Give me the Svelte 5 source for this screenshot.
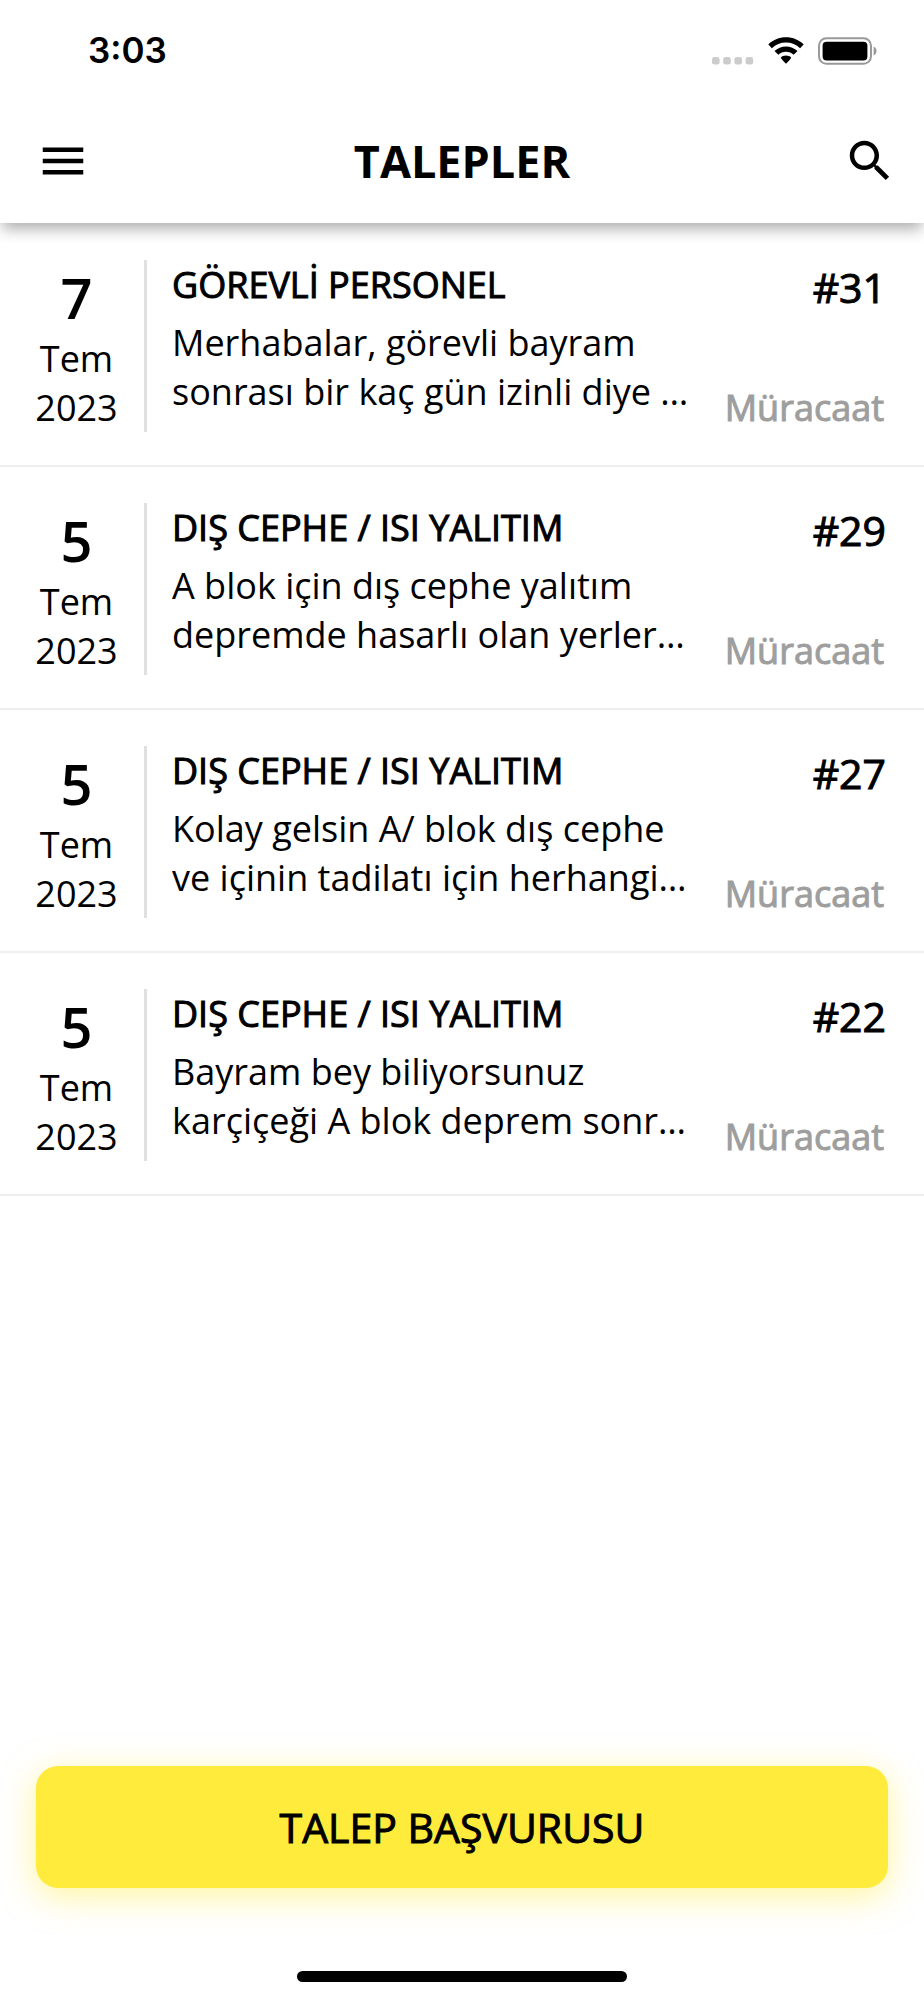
<script lang="ts">
  interface Talep {
    id: number;
    day: number;
    month: string;
    year: number;
    title: string;
    text: string;
    status: string;
  }

  const talepler: Talep[] = [
    {
      id: 31,
      day: 7,
      month: 'Tem',
      year: 2023,
      title: 'GÖREVLİ PERSONEL',
      text: 'Merhabalar, görevli bayram sonrası bir kaç gün izinli diye …',
      status: 'Müracaat'
    },
    {
      id: 29,
      day: 5,
      month: 'Tem',
      year: 2023,
      title: 'DIŞ CEPHE / ISI YALITIM',
      text: 'A blok için dış cephe yalıtım depremde hasarlı olan yerler…',
      status: 'Müracaat'
    },
    {
      id: 27,
      day: 5,
      month: 'Tem',
      year: 2023,
      title: 'DIŞ CEPHE / ISI YALITIM',
      text: 'Kolay gelsin A/ blok dış cephe ve içinin tadilatı için herhangi…',
      status: 'Müracaat'
    },
    {
      id: 22,
      day: 5,
      month: 'Tem',
      year: 2023,
      title: 'DIŞ CEPHE / ISI YALITIM',
      text: 'Bayram bey biliyorsunuz karçiçeği A blok deprem sonr…',
      status: 'Müracaat'
    }
  ];
</script>

<div class="screen">
  <header>
    <div class="status-bar">
      <span class="clock">3:03</span>
      <div class="indicators">
        <svg class="signal" width="42" height="8" viewBox="0 0 42 8" aria-hidden="true">
          {#each [0, 11.2, 22.4, 33.6] as x}
            <rect {x} y="0" width="7.6" height="7.6" rx="2.4" />
          {/each}
        </svg>
        <svg class="wifi" width="36" height="27" viewBox="0 0 36 27" aria-hidden="true">
          <path d="M18 0.3C24.9 0.3 31.2 2.9 35.7 7.5L32.1 11.2C28.4 7.5 23.4 5.5 18 5.5S7.6 7.5 3.9 11.2L0.3 7.5C4.8 2.9 11.1 0.3 18 0.3Z" />
          <path d="M18 9.4C22.4 9.4 26.5 11.1 29.5 14L25.7 17.8C23.7 15.9 20.9 14.7 18 14.7S12.3 15.9 10.3 17.8L6.5 14C9.5 11.1 13.6 9.4 18 9.4Z" />
          <path d="M18 18.6C20 18.6 21.8 19.3 23.2 20.5C22.9 22 20.3 24.6 18 26.7C15.7 24.6 13.1 22 12.8 20.5C14.2 19.3 16 18.6 18 18.6Z" />
        </svg>
        <svg width="60" height="28" viewBox="0 0 60 28" aria-hidden="true">
          <rect x="1" y="1.2" width="52" height="25.6" rx="7.5" fill="none" stroke="#999" stroke-width="2" />
          <rect x="4.6" y="4.8" width="44.8" height="18.6" rx="4" />
          <path d="M55.6 9.5C57.4 10.2 58.5 12 58.5 14S57.4 17.8 55.6 18.5Z" fill="#999" />
        </svg>
      </div>
    </div>
    <div class="app-bar">
      <button class="icon-btn" aria-label="Menü">
        <svg width="54" height="54" viewBox="0 0 24 24" aria-hidden="true">
          <path d="M3 18h18v-2H3v2zm0-5h18v-2H3v2zm0-7v2h18V6H3z" />
        </svg>
      </button>
      <h1>TALEPLER</h1>
      <button class="icon-btn" aria-label="Ara">
        <svg width="54" height="54" viewBox="0 0 24 24" aria-hidden="true">
          <path
            d="M15.5 14h-.79l-.28-.27C15.41 12.59 16 11.11 16 9.5 16 5.91 13.09 3 9.5 3S3 5.91 3 9.5 5.91 16 9.5 16c1.61 0 3.09-.59 4.23-1.57l.27.28v.79l5 4.99L20.49 19l-4.99-5zm-6 0C7.01 14 5 11.99 5 9.5S7.01 5 9.5 5 14 7.01 14 9.5 11.99 14 9.5 14z"
          />
        </svg>
      </button>
    </div>
  </header>

  <ul>
    {#each talepler as talep (talep.id)}
      <li>
        <div class="date">
          <strong>{talep.day}</strong>
          <span>{talep.month}</span>
          <span>{talep.year}</span>
        </div>
        <div class="body">
          <h2>{talep.title}</h2>
          <p>{talep.text}</p>
        </div>
        <div class="meta">
          <span class="number">#{talep.id}</span>
          <span class="status">{talep.status}</span>
        </div>
      </li>
    {/each}
  </ul>

  <footer>
    <button class="apply">TALEP BAŞVURUSU</button>
    <div class="home-indicator"></div>
  </footer>
</div>

<style>
  :global(body) {
    margin: 0;
    background: #fff;
  }
  .screen {
    display: flex;
    flex-direction: column;
    min-height: 100vh;
    font-family: 'Open Sans', 'Noto Sans', sans-serif;
    font-size: 36px;
    line-height: 49px;
    color: #000;
  }
  button {
    border: 0;
    font: inherit;
    color: inherit;
    cursor: pointer;
  }
  svg {
    display: block;
  }
  header {
    position: relative;
    background: #fff;
    box-shadow: 0 8px 14px -2px rgba(0, 0, 0, 0.32);
  }
  .status-bar {
    display: flex;
    align-items: center;
    justify-content: space-between;
    height: 98px;
    padding: 3px 46px 0 88px;
    box-sizing: border-box;
  }
  .clock {
    font-family: Inter, sans-serif;
    font-size: 35px;
    font-weight: 600;
  }
  .indicators {
    display: flex;
    align-items: center;
    gap: 14px;
  }
  .signal {
    align-self: flex-end;
    fill: #ccc;
  }
  .app-bar {
    display: flex;
    align-items: center;
    height: 125px;
    padding: 0 27px 0 36px;
  }
  .icon-btn {
    flex: none;
    padding: 0;
    background: none;
  }
  h1 {
    flex: 1;
    margin: 0;
    padding-right: 9px;
    font-size: 45px;
    font-weight: 700;
    text-align: center;
  }
  ul {
    flex: 1;
    margin: 0;
    padding: 1px 0 0;
    list-style: none;
  }
  li {
    display: flex;
    padding: 36px 38px 33px 36px;
    border-bottom: 2px solid #eee;
  }
  .date {
    display: flex;
    flex-direction: column;
    align-items: center;
    flex: none;
    width: 81px;
    padding-right: 27px;
    border-right: 3px solid #e0e0e0;
  }
  .date strong {
    font-size: 56px;
    line-height: 74px;
    font-weight: 600;
  }
  .body {
    flex: 1;
    min-width: 0;
    padding: 0 32px 0 25px;
  }
  /* medium weight: regular glyphs thickened with a stroke */
  h2,
  .number,
  .status,
  .apply {
    font-weight: 400;
    -webkit-text-stroke: 1px currentColor;
  }
  h2 {
    margin: 0 0 9px;
    font-size: 36px;
  }
  p {
    display: -webkit-box;
    -webkit-box-orient: vertical;
    -webkit-line-clamp: 2;
    line-clamp: 2;
    margin: 0;
    overflow: hidden;
  }
  .meta {
    display: flex;
    flex-direction: column;
    align-items: flex-end;
    justify-content: space-between;
    flex: none;
  }
  .number {
    font-size: 41px;
    line-height: 54px;
  }
  .status {
    padding-right: 2px;
    color: #9e9e9e;
  }
  footer {
    display: flex;
    flex-direction: column;
    align-items: center;
    gap: 83px;
    padding: 0 36px 18px;
  }
  .apply {
    width: 100%;
    height: 122px;
    border-radius: 22px;
    background: #ffeb3b;
    box-shadow: 0 8px 34px rgba(255, 235, 59, 0.5);
    font-size: 41px;
  }
  .home-indicator {
    width: 330px;
    height: 11px;
    border-radius: 6px;
    background: #000;
  }
</style>
